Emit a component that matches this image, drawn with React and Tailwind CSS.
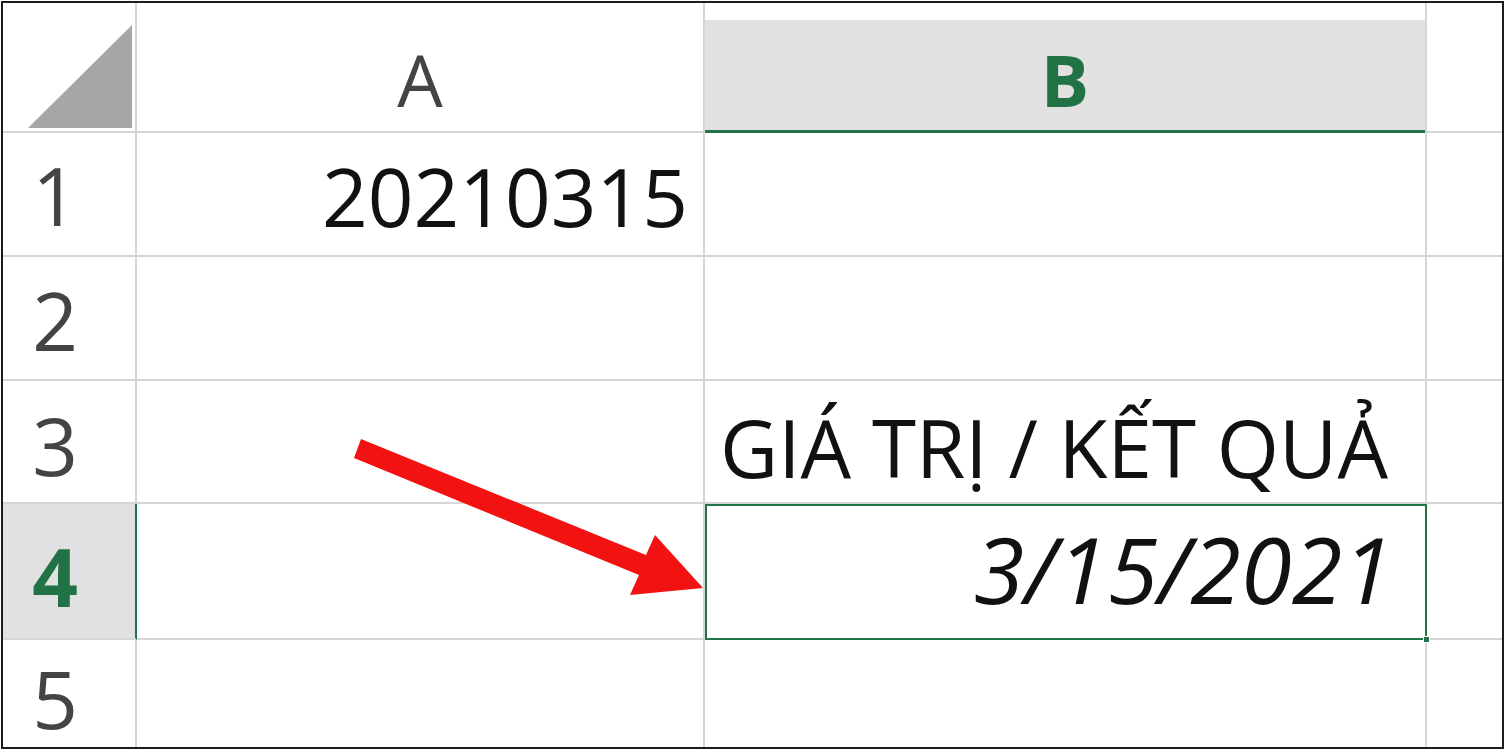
export default function App() {
  const line = 'border-[#d6d6d6]'
  return (
    <div className="w-[1509px] h-[753px] bg-white relative" style={{ fontFamily: '"Open Sans", "Noto Sans", sans-serif' }}>
      <div className="ml-[1px] mt-[1px] w-[1503px] h-[748px] border-2 border-[#1c1c1c] overflow-hidden">
        <div className="grid grid-cols-[134px_568px_722px_1fr] grid-rows-[130px_124px_124px_123px_136px_1fr] h-full">
          {/* header row */}
          <div className={`border-r-2 border-b-2 ${line} relative`}>
            <svg className="absolute left-0 top-0" width="134" height="130">
              <polygon points="25,125 129,125 129,22" fill="#a6a6a6" />
            </svg>
          </div>
          <div className={`border-r-2 border-b-2 ${line} flex justify-center items-start pt-[40px] text-[72px] leading-none text-[#444]`}>
            A
          </div>
          <div className={`border-r-2 ${line} flex flex-col`}>
            <div className="h-[17px] bg-white" />
            <div className="flex-1 bg-[#e1e1e1] border-b-[3px] border-[#217346] flex justify-center items-start pt-[23px] text-[72px] leading-none font-bold text-[#217346]">
              B
            </div>
          </div>
          <div className={`border-b-2 ${line}`} />

          {/* row 1 */}
          <div className={`border-r-2 border-b-2 ${line} flex justify-center items-start pt-[22px] pr-[28px] text-[80px] leading-none text-[#444]`}>1</div>
          <div className={`border-r-2 border-b-2 ${line} flex justify-end items-start pt-[23px] pr-[15px] text-[80px] leading-none text-[#111]`}>20210315</div>
          <div className={`border-r-2 border-b-2 ${line}`} />
          <div className={`border-b-2 ${line}`} />

          {/* row 2 */}
          <div className={`border-r-2 border-b-2 ${line} flex justify-center items-start pt-[23px] pr-[28px] text-[80px] leading-none text-[#444]`}>2</div>
          <div className={`border-r-2 border-b-2 ${line}`} />
          <div className={`border-r-2 border-b-2 ${line}`} />
          <div className={`border-b-2 ${line}`} />

          {/* row 3 */}
          <div className={`border-r-2 border-b-2 ${line} flex justify-center items-start pt-[24px] pr-[28px] text-[80px] leading-none text-[#444]`}>3</div>
          <div className={`border-r-2 border-b-2 ${line}`} />
          <div className={`border-r-2 border-b-2 ${line} flex justify-start items-start pt-[26px] pl-[15px] text-[80px] leading-none text-[#111] whitespace-nowrap`}>
            GIÁ TRỊ / KẾT QUẢ
          </div>
          <div className={`border-b-2 ${line}`} />

          {/* row 4 */}
          <div className="bg-[#e1e1e1] border-r-2 border-r-[#217346] border-b-2 border-b-[#d6d6d6] flex justify-center items-start pt-[32px] pr-[28px] text-[80px] leading-none font-bold text-[#217346]">4</div>
          <div className={`border-r-2 border-b-2 ${line}`} />
          <div className="border-2 border-[#217346] relative flex justify-end items-start pt-[17px] pr-[32px] text-[92px] leading-none italic text-[#111]">
            3/15/2021
            <div className="absolute right-[-5px] bottom-[-5px] w-[7px] h-[7px] bg-[#217346] border border-white" />
          </div>
          <div className={`border-b-2 ${line}`} />

          {/* row 5 */}
          <div className={`border-r-2 ${line} flex justify-center items-start pt-[23px] pr-[28px] text-[80px] leading-[70px] text-[#444]`}>5</div>
          <div className={`border-r-2 ${line}`} />
          <div className={`border-r-2 ${line}`} />
          <div />
        </div>
      </div>

      <svg className="absolute left-0 top-0 pointer-events-none" width="1509" height="753">
        <polygon
          points="361,438 646,554 655,534 703,587 630,594 639,574 354,457"
          fill="#f21212"
        />
      </svg>
    </div>
  )
}
